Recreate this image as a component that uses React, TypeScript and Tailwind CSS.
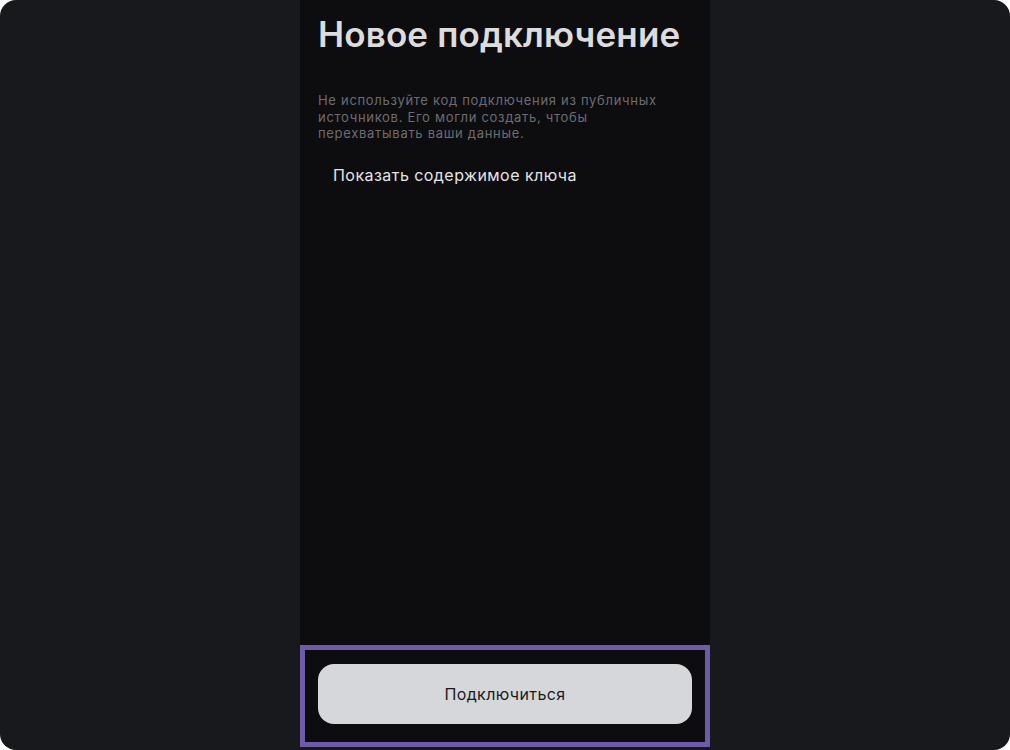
const font = { fontFamily: "Inter, 'Noto Sans', sans-serif" };

const App = () => {
  return (
    <div className="h-[750px] w-full bg-white" style={font}>
      <div className="flex h-full w-full justify-center overflow-hidden rounded-[16px] bg-[#18191d]">
        <div className="flex h-[747px] w-[410px] flex-col bg-[#0d0d0f]">
          <div className="flex-1 px-[18px]">
            <h1 className="pt-[12px] text-[35px] font-semibold leading-[44px] tracking-[0.15px] text-[#dcdcde]">
              Новое подключение
            </h1>
            <p className="mt-[36px] max-w-[350px] text-[13px] leading-[16.5px] tracking-[0.7px] text-[#6c6c72]">
              Не используйте код подключения из публичных источников. Его могли создать, чтобы
              перехватывать ваши данные.
            </p>
            <button
              type="button"
              className="mt-[23px] pl-[15px] text-[16px] leading-[20px] tracking-[0.45px] text-[#e4e4e6]"
            >
              Показать содержимое ключа
            </button>
          </div>
          <div className="border-[5px] border-[#6f5ca8] px-[13px] pb-[18px] pt-[14px]">
            <button
              type="button"
              className="flex h-[60px] w-full items-center justify-center rounded-[16px] bg-[#d6d7db] text-[16px] tracking-[0.4px] text-[#1a1a1c]"
            >
              Подключиться
            </button>
          </div>
        </div>
      </div>
    </div>
  );
};

export default App;
